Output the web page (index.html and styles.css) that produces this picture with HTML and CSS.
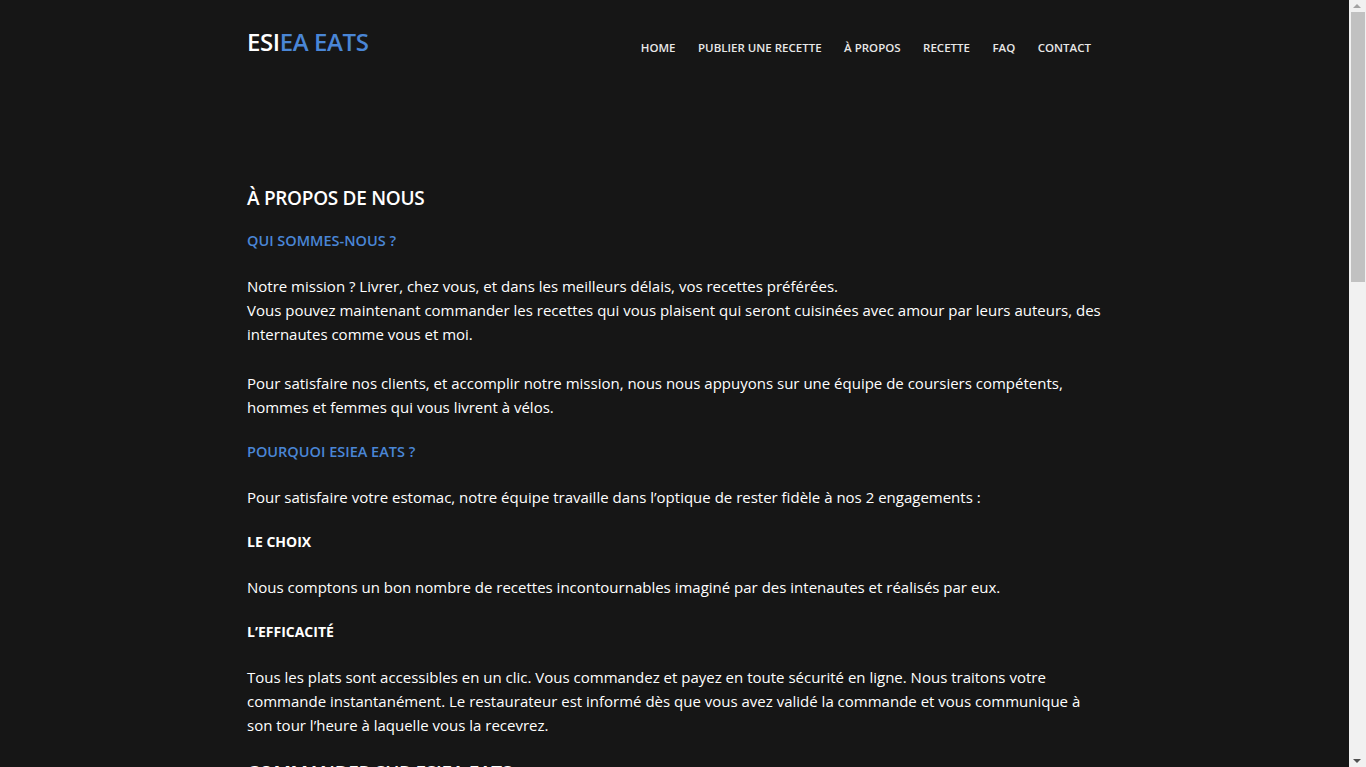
FILE: index.html
```html
<!DOCTYPE html>
<html lang="fr">
<head>
<meta charset="utf-8">
<title>À propos - ESIEA EATS</title>
<link rel="stylesheet" href="styles.css">
</head>
<body>
<div class="page">
  <header class="site-header">
    <div class="container header-inner">
      <a class="logo" href="#"><span class="logo-white">ESI</span><span class="logo-blue">EA EATS</span></a>
      <nav class="nav">
        <a href="#">HOME</a>
        <a href="#">PUBLIER UNE RECETTE</a>
        <a href="#">À PROPOS</a>
        <a href="#">RECETTE</a>
        <a href="#">FAQ</a>
        <a href="#">CONTACT</a>
      </nav>
    </div>
  </header>
  <main class="container content">
    <h1 class="title">À PROPOS DE NOUS</h1>
    <h3 class="sub">QUI SOMMES-NOUS ?</h3>
    <p class="text">Notre mission ? Livrer, chez vous, et dans les meilleurs délais, vos recettes préférées.<br>Vous pouvez maintenant commander les recettes qui vous plaisent qui seront cuisinées avec amour par leurs auteurs, des internautes comme vous et moi.</p>
    <p class="text text-follow">Pour satisfaire nos clients, et accomplir notre mission, nous nous appuyons sur une équipe de coursiers compétents, hommes et femmes qui vous livrent à vélos.</p>
    <h3 class="sub">POURQUOI ESIEA EATS ?</h3>
    <p class="text">Pour satisfaire votre estomac, notre équipe travaille dans l’optique de rester fidèle à nos 2 engagements :</p>
    <h4 class="label">LE CHOIX</h4>
    <p class="text">Nous comptons un bon nombre de recettes incontournables imaginé par des intenautes et réalisés par eux.</p>
    <h4 class="label">L’EFFICACITÉ</h4>
    <p class="text">Tous les plats sont accessibles en un clic. Vous commandez et payez en toute sécurité en ligne. Nous traitons votre commande instantanément. Le restaurateur est informé dès que vous avez validé la commande et vous communique à son tour l’heure à laquelle vous la recevrez.</p>
    <h2 class="title title-next">COMMANDER SUR ESIEA EATS</h2>
    <p class="text">Choisissez votre recette, passez commande et recevez votre plat directement chez vous, livré à vélo par nos coursiers.</p>
    <p class="text">Bon appétit !</p>
  </main>
</div>
<div class="scrollbar" aria-hidden="true">
  <span class="sb-arrow sb-up"></span>
  <span class="sb-thumb"></span>
  <span class="sb-arrow sb-down"></span>
</div>
</body>
</html>
```
FILE: styles.css
```css
html, body {
  margin: 0;
  padding: 0;
  background: #161616;
}
body {
  font-family: "Open Sans", "Noto Sans", sans-serif;
  color: #ffffff;
}
.page {
  margin-right: 17px;
}
.container {
  width: 855px;
  margin: 0 auto;
}
.header-inner {
  display: flex;
  justify-content: space-between;
  align-items: flex-start;
  padding-top: 27px;
}
.logo {
  text-decoration: none;
  font-size: 24px;
  line-height: 30px;
  font-weight: 600;
  letter-spacing: -0.4px;
}
.logo-white { color: #ffffff; }
.logo-blue { color: #4a86d6; }
.nav {
  display: flex;
  gap: 22.5px;
  margin-top: 11px;
  margin-right: 11px;
}
.nav a {
  color: #e8e8e8;
  text-decoration: none;
  font-size: 11.5px;
  font-weight: 600;
  line-height: 20px;
}
.content {
  padding-top: 125px;
  padding-bottom: 60px;
}
.title {
  margin: 0 0 16px;
  font-size: 19px;
  line-height: 30px;
  font-weight: 600;
  letter-spacing: -0.3px;
  color: #ffffff;
}
.title-next {
  margin-top: 17px;
}
.sub {
  margin: 0 0 21px;
  font-size: 14.5px;
  line-height: 24px;
  font-weight: 600;
  color: #4a86d6;
}
.label {
  margin: 0 0 21px;
  font-size: 14px;
  line-height: 24px;
  font-weight: 700;
  color: #ffffff;
}
.text {
  margin: 0 0 21px;
  font-size: 15px;
  line-height: 24px;
  color: #ffffff;
}
.text-follow {
  margin-top: 25px;
}
.scrollbar {
  position: fixed;
  top: 0;
  right: 0;
  bottom: 0;
  width: 17px;
  background: #f1f1f1;
}
.sb-thumb {
  position: absolute;
  left: 2px;
  right: 1px;
  top: 12px;
  height: 270px;
  background: #c1c1c1;
}
.sb-arrow {
  position: absolute;
  left: 4px;
  width: 0;
  height: 0;
  border-left: 4px solid transparent;
  border-right: 4px solid transparent;
}
.sb-up {
  top: 4px;
  border-bottom: 4px solid #a3a3a3;
}
.sb-down {
  bottom: 4px;
  border-top: 4px solid #505050;
}
```
